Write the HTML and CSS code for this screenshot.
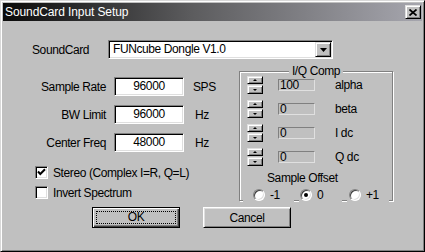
FILE: index.html
```html
<!DOCTYPE html>
<html>
<head>
<meta charset="utf-8">
<link rel="stylesheet" href="styles.css">
</head>
<body>
<div class="dialog">
  <div class="titlebar">
    <span class="title">SoundCard Input Setup</span>
    <span class="close"><svg width="8" height="7" viewBox="0 0 8 7"><path d="M0.5 0.5 L7.5 6.5 M7.5 0.5 L0.5 6.5" stroke="#000" stroke-width="1.7" fill="none"/></svg></span>
  </div>
  <div class="content">
    <div class="top-row">
      <span class="sc-label">SoundCard</span>
      <div class="combo">
        <span class="combo-text">FUNcube Dongle V1.0</span>
        <span class="combo-btn raised"><svg width="7" height="4" viewBox="0 0 7 4"><polygon points="0,0 7,0 3.5,4" fill="#000"/></svg></span>
      </div>
    </div>
    <div class="main">
      <div class="left">
        <div class="field"><span class="flabel">Sample Rate</span><span class="edit">96000</span><span class="unit">SPS</span></div>
        <div class="field"><span class="flabel">BW Limit</span><span class="edit">96000</span><span class="unit hz">Hz</span></div>
        <div class="field"><span class="flabel">Center Freq</span><span class="edit">48000</span><span class="unit hz">Hz</span></div>
        <div class="check first"><span class="cbox"><svg width="9" height="9" viewBox="0 0 9 9"><polyline points="1,3.5 3.3,6 8,1.2" stroke="#000" stroke-width="2" fill="none"/></svg></span><span>Stereo (Complex I=R, Q=L)</span></div>
        <div class="check second"><span class="cbox"></span><span>Invert Spectrum</span></div>
      </div>
      <div class="group">
        <span class="legend">I/Q Comp</span>
        <div class="spinrow"><div class="spin"><span class="sb up raised"></span><span class="sb down raised"></span></div><span class="dis">100</span><span class="slabel">alpha</span></div>
        <div class="spinrow"><div class="spin"><span class="sb up raised"></span><span class="sb down raised"></span></div><span class="dis">0</span><span class="slabel">beta</span></div>
        <div class="spinrow"><div class="spin"><span class="sb up raised"></span><span class="sb down raised"></span></div><span class="dis">0</span><span class="slabel">I dc</span></div>
        <div class="spinrow"><div class="spin"><span class="sb up raised"></span><span class="sb down raised"></span></div><span class="dis">0</span><span class="slabel">Q dc</span></div>
        <div class="offset-title">Sample Offset</div>
        <div class="radios">
          <div class="ritem r1"><span class="radio"></span><span class="rtext">-1</span></div>
          <div class="ritem r2"><span class="radio on"></span><span class="rtext">0</span></div>
          <div class="ritem r3"><span class="radio"></span><span class="rtext">+1</span></div>
        </div>
      </div>
    </div>
    <div class="buttons">
      <button class="btn default"><span class="focus">OK</span></button>
      <button class="btn normal">Cancel</button>
    </div>
  </div>
</div>
</body>
</html>
```

FILE: styles.css
```css
html, body {
  margin: 0;
  padding: 0;
  background: #c0c0c0;
}

.dialog {
  width: 425px;
  height: 252px;
  box-sizing: border-box;
  background: #c0c0c0;
  border: 1px solid;
  border-color: #d8d8d8 #000 #000 #d8d8d8;
  box-shadow: inset 1px 1px 0 #fff, inset -1px -1px 0 #808080;
  padding: 2px;
  font-family: "Liberation Sans", Arial, sans-serif;
  font-size: 12px;
  letter-spacing: -0.4px;
  color: #000;
}

.titlebar {
  height: 18px;
  display: flex;
  align-items: center;
  justify-content: space-between;
  background: linear-gradient(90deg, #0a0a0a 0%, #5c5c5e 45%, #a6a6ae 100%);
  color: #fff;
  padding-left: 2px;
}

.title {
  letter-spacing: -0.1px;
  line-height: 14px;
}

.close {
  width: 16px;
  height: 14px;
  box-sizing: border-box;
  margin-right: 1px;
  display: flex;
  align-items: center;
  justify-content: center;
  background: #c0c0c0;
  border: 1px solid;
  border-color: #dfdfdf #000 #000 #dfdfdf;
  box-shadow: inset 1px 1px 0 #fff, inset -1px -1px 0 #808080;
}

.raised {
  background: #c0c0c0;
  box-sizing: border-box;
  border: 1px solid;
  border-color: #dfdfdf #000 #000 #dfdfdf;
  box-shadow: inset 1px 1px 0 #fff, inset -1px -1px 0 #808080;
}

.sunken {
  box-sizing: border-box;
}

.top-row {
  margin-top: 19px;
  padding-left: 29px;
  display: flex;
  align-items: center;
  height: 19px;
}

.sc-label {
  width: 76px;
}

.combo {
  width: 225px;
  height: 19px;
  box-sizing: border-box;
  display: flex;
  align-items: stretch;
  background: #fff;
  border: 1px solid;
  border-color: #808080 #fff #fff #808080;
  box-shadow: inset 1px 1px 0 #000, inset -1px -1px 0 #dfdfdf;
  padding: 1px 1px 1px 1px;
}

.combo-text {
  flex: 1;
  padding-left: 3px;
  line-height: 15px;
}

.combo-btn {
  width: 16px;
  display: flex;
  align-items: center;
  justify-content: center;
}

.main {
  display: flex;
  margin-top: 12px;
  height: 130px;
}

.left {
  width: 236px;
  padding-top: 6px;
  box-sizing: border-box;
}

.field {
  display: flex;
  align-items: center;
  height: 19px;
}

.field + .field {
  margin-top: 9px;
}

.flabel {
  width: 103px;
  text-align: right;
}

.edit {
  margin-left: 8px;
  width: 70px;
  height: 19px;
  box-sizing: border-box;
  background: #fff;
  border: 1px solid;
  border-color: #808080 #fff #fff #808080;
  box-shadow: inset 1px 1px 0 #000, inset -1px -1px 0 #dfdfdf;
  text-align: center;
  line-height: 16px;
}

.unit {
  margin-left: 9px;
}

.unit.hz {
  margin-left: 11px;
}

.check {
  display: flex;
  align-items: center;
  height: 13px;
  padding-left: 32px;
}

.check.first {
  margin-top: 14px;
}

.check.second {
  margin-top: 7px;
}

.cbox {
  width: 13px;
  height: 13px;
  box-sizing: border-box;
  background: #fff;
  border: 1px solid;
  border-color: #808080 #fff #fff #808080;
  box-shadow: inset 1px 1px 0 #000, inset -1px -1px 0 #dfdfdf;
  margin-right: 5px;
  display: flex;
  align-items: center;
  justify-content: center;
}

.group {
  position: relative;
  width: 154px;
  height: 130px;
  box-sizing: border-box;
  border: 1px solid #808080;
  box-shadow: inset 1px 1px 0 #fff, 1px 1px 0 #fff;
  padding: 4px 0 0 7px;
}

.legend {
  position: absolute;
  top: -8px;
  left: 50%;
  transform: translateX(-50%);
  background: #c0c0c0;
  padding: 0 3px;
  line-height: 14px;
  white-space: nowrap;
}

.spinrow {
  display: flex;
  align-items: center;
  height: 18px;
}

.spinrow + .spinrow {
  margin-top: 6px;
}

.spin {
  width: 16px;
  height: 18px;
  display: flex;
  flex-direction: column;
  gap: 1px;
}

.sb {
  display: flex;
  align-items: center;
  justify-content: center;
}

.sb.up {
  height: 8px;
}

.sb.down {
  height: 9px;
}

.sb.up::after {
  content: "";
  border-left: 2px solid transparent;
  border-right: 2px solid transparent;
  border-bottom: 2px solid #000;
}

.sb.down::after {
  content: "";
  border-left: 2px solid transparent;
  border-right: 2px solid transparent;
  border-top: 2px solid #000;
}

.dis {
  margin-left: 15px;
  width: 37px;
  height: 12px;
  box-sizing: border-box;
  border: 1px solid;
  border-color: #808080 #e0e0e0 #e0e0e0 #808080;
  background: #c0c0c0;
  line-height: 10px;
  padding-left: 1px;
}

.slabel {
  margin-left: 20px;
}

.offset-title {
  margin-top: 5px;
  padding-left: 20px;
  line-height: 14px;
}

.radios {
  display: flex;
  height: 15px;
  margin-top: 2px;
  margin-left: -4px;
  gap: 5px;
}

.ritem {
  display: flex;
  align-items: center;
  background: #c0c0c0;
  height: 15px;
  box-sizing: border-box;
}

.r1 {
  width: 51px;
  padding-left: 10px;
}

.r2 {
  width: 43px;
  padding-left: 1px;
}

.r3 {
  width: 42px;
  padding-left: 2px;
}

.radio {
  width: 12px;
  height: 12px;
  box-sizing: border-box;
  border-radius: 50%;
  background: #fff;
  border: 1px solid;
  border-color: #808080 #fff #fff #808080;
  box-shadow: inset 1px 1px 0 #404040, inset -1px -1px 0 #dfdfdf;
  display: flex;
  align-items: center;
  justify-content: center;
}

.radio.on::after {
  content: "";
  width: 4px;
  height: 4px;
  border-radius: 50%;
  background: #000;
}

.rtext {
  margin-left: 5px;
}

.buttons {
  display: flex;
  margin-top: 6px;
  padding-left: 89px;
  gap: 23px;
}

.btn {
  appearance: none;
  margin: 0;
  padding: 0;
  width: 88px;
  height: 21px;
  box-sizing: border-box;
  font-family: inherit;
  font-size: 12px;
  letter-spacing: -0.4px;
  color: #000;
  background: #c0c0c0;
  display: flex;
  align-items: center;
  justify-content: center;
}

.btn.default {
  border: 1px solid #000;
  box-shadow: inset 1px 1px 0 #fff, inset -1px -1px 0 #404040, inset -2px -2px 0 #808080;
  padding: 3px;
}

.focus {
  flex: 1;
  align-self: stretch;
  border: 1px dotted #000;
  display: flex;
  align-items: center;
  justify-content: center;
  line-height: 11px;
}

.btn.normal {
  border: 1px solid;
  border-color: #fff #000 #000 #fff;
  box-shadow: inset 1px 1px 0 #dfdfdf, inset -1px -1px 0 #808080;
}
```
